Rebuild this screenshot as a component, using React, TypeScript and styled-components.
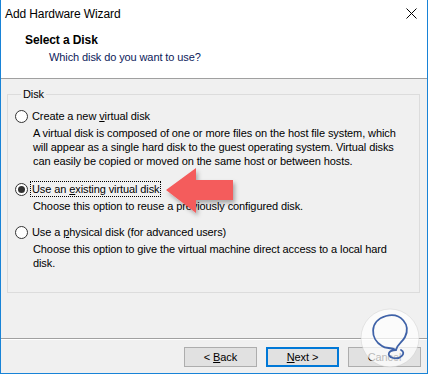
import React from "react";
import styled, { createGlobalStyle } from "styled-components";

const GlobalStyle = createGlobalStyle`
	html, body {
		margin: 0;
		padding: 0;
		background: #fff;
	}
	body {
		width: 428px;
		height: 374px;
		overflow: hidden;
		font-family: "Liberation Sans", Arial, sans-serif;
		font-size: 11px;
		letter-spacing: -0.1px;
	}
`;

const Window = styled.div`
	position: relative;
	width: 428px;
	height: 374px;
	box-sizing: border-box;
	border: 1px solid #1883d7;
	border-top: none;
	display: flex;
	flex-direction: column;
	background: #f0f0f0;
	color: #000;
	overflow: hidden;
`;

const TitleBar = styled.div`
	height: 27px;
	flex: none;
	display: flex;
	align-items: center;
	justify-content: space-between;
	padding: 0 10px 0 4px;
	background: #fff;
`;

const TitleText = styled.span`
	font-size: 12px;
	letter-spacing: -0.1px;
	color: #000;
`;

const Header = styled.div`
	height: 52px;
	flex: none;
	box-sizing: border-box;
	background: #fff;
	border-bottom: 1px solid #a0a0a0;
	padding: 6px 0 0 24px;
	white-space: nowrap;
`;

const HeaderTitle = styled.div`
	font-weight: 700;
	font-size: 12px;
	line-height: 14px;
`;

const HeaderSub = styled.div`
	line-height: 14px;
	margin: 3px 0 0 24px;
	color: #0c1a5a;
`;

const Body = styled.div`
	flex: 1;
	padding: 8px 7px 0 6px;
`;

const Group = styled.fieldset`
	margin: 0;
	padding: 7px 0 22px 7px;
	border: 1px solid #dcdcdc;
	min-width: 0;
	white-space: nowrap;
`;

const Legend = styled.legend`
	margin-left: 6px;
	padding: 0 2px;
	line-height: 14px;
`;

const Option = styled.div<{ $gap: number }>`
	margin-top: ${p => p.$gap}px;
`;

const RadioRow = styled.div`
	display: flex;
	align-items: center;
	height: 16px;
	gap: 3px;
`;

const Radio = styled.span<{ $checked?: boolean }>`
	width: 13px;
	height: 13px;
	box-sizing: border-box;
	border-radius: 50%;
	border: 1px solid #333;
	background: #fff;
	display: flex;
	align-items: center;
	justify-content: center;
	&::after {
		content: "";
		display: ${p => ( p.$checked ? "block" : "none" )};
		width: 7px;
		height: 7px;
		border-radius: 50%;
		background: #333;
	}
`;

const Label = styled.span<{ $focused?: boolean }>`
	line-height: 14px;
	padding: 0 1px;
	outline: ${p => ( p.$focused ? "1px dotted #000" : "none" )};
	outline-offset: 0;
`;

const Desc = styled.div`
	margin-top: 2px;
	padding-left: 18px;
	line-height: 14px;
	color: #000;
`;

const Footer = styled.div`
	flex: none;
	height: 35px;
	box-sizing: border-box;
	border-top: 1px solid #a0a0a0;
	box-shadow: inset 0 1px 0 #fff;
	display: flex;
	justify-content: flex-end;
	align-items: flex-start;
	gap: 9px;
	padding: 8px 6px 0 0;
`;

const Button = styled.button<{ $default?: boolean }>`
	width: 73px;
	height: 20px;
	box-sizing: border-box;
	margin: 0;
	padding: 0;
	font-family: inherit;
	font-size: 11px;
	letter-spacing: inherit;
	color: #000;
	background: #e1e1e1;
	border: ${p => ( p.$default ? "2px solid #0078d7" : "1px solid #adadad" )};
`;

const Arrow = styled.svg`
	position: absolute;
	left: 158px;
	top: 160px;
	width: 84px;
	height: 62px;
	overflow: visible;
`;

const Watermark = styled.svg`
	position: absolute;
	left: 355px;
	top: 305px;
	width: 70px;
	height: 69px;
`;

const U = styled.span`
	text-decoration: underline;
`;

const App = () => {
	return (
		<>
			<GlobalStyle />
			<Window>
				<TitleBar>
					<TitleText>Add Hardware Wizard</TitleText>
					<svg width="11" height="11" viewBox="0 0 11 11">
						<path d="M0.5 0.5 L10.5 10.5 M10.5 0.5 L0.5 10.5" stroke="#000" strokeWidth="1" />
					</svg>
				</TitleBar>
				<Header>
					<HeaderTitle>Select a Disk</HeaderTitle>
					<HeaderSub>Which disk do you want to use?</HeaderSub>
				</Header>
				<Body>
					<Group>
						<Legend>Disk</Legend>
						<Option $gap={0}>
							<RadioRow>
								<Radio />
								<Label>Create a new <U>v</U>irtual disk</Label>
							</RadioRow>
							<Desc>
								A virtual disk is composed of one or more files on the host file system, which<br />
								will appear as a single hard disk to the guest operating system. Virtual disks<br />
								can easily be copied or moved on the same host or between hosts.
							</Desc>
						</Option>
						<Option $gap={13}>
							<RadioRow>
								<Radio $checked />
								<Label $focused>Use an <U>e</U>xisting virtual disk</Label>
							</RadioRow>
							<Desc>Choose this option to reuse a previously configured disk.</Desc>
						</Option>
						<Option $gap={11}>
							<RadioRow>
								<Radio />
								<Label>Use a <U>p</U>hysical disk (for advanced users)</Label>
							</RadioRow>
							<Desc>
								Choose this option to give the virtual machine direct access to a local hard<br />
								disk.
							</Desc>
						</Option>
					</Group>
				</Body>
				<Footer>
					<Button>&lt; <U>B</U>ack</Button>
					<Button $default><U>N</U>ext &gt;</Button>
					<Button>Cancel</Button>
				</Footer>
				<Arrow viewBox="158 160 84 62">
					<defs>
						<filter id="sh" x="-20%" y="-20%" width="150%" height="160%">
							<feDropShadow dx="2" dy="3" stdDeviation="2" floodColor="#000" floodOpacity="0.3" />
						</filter>
					</defs>
					<polygon
						points="165,190 195,168 195,180 232,180 232,200 195,200 195,213"
						fill="#f45b5b"
						filter="url(#sh)"
					/>
				</Arrow>
				<Watermark viewBox="355 305 70 69">
					<circle cx="389" cy="338" r="29" fill="rgba(255,255,255,0.72)" stroke="rgba(200,200,200,0.4)" />
					<path
						d="M381 346 C369 339 368 321 385 316 C400 312 410 325 404 337 C401 343 396 344 395 350 C387 350 385 356 392 358 C399 360 406 353 400 350 M381 346 C385 349 390 347 395 350"
						fill="none"
						stroke="#3f62a8"
						strokeWidth="1.8"
						strokeLinecap="round"
					/>
				</Watermark>
			</Window>
		</>
	);
};

export default App;
